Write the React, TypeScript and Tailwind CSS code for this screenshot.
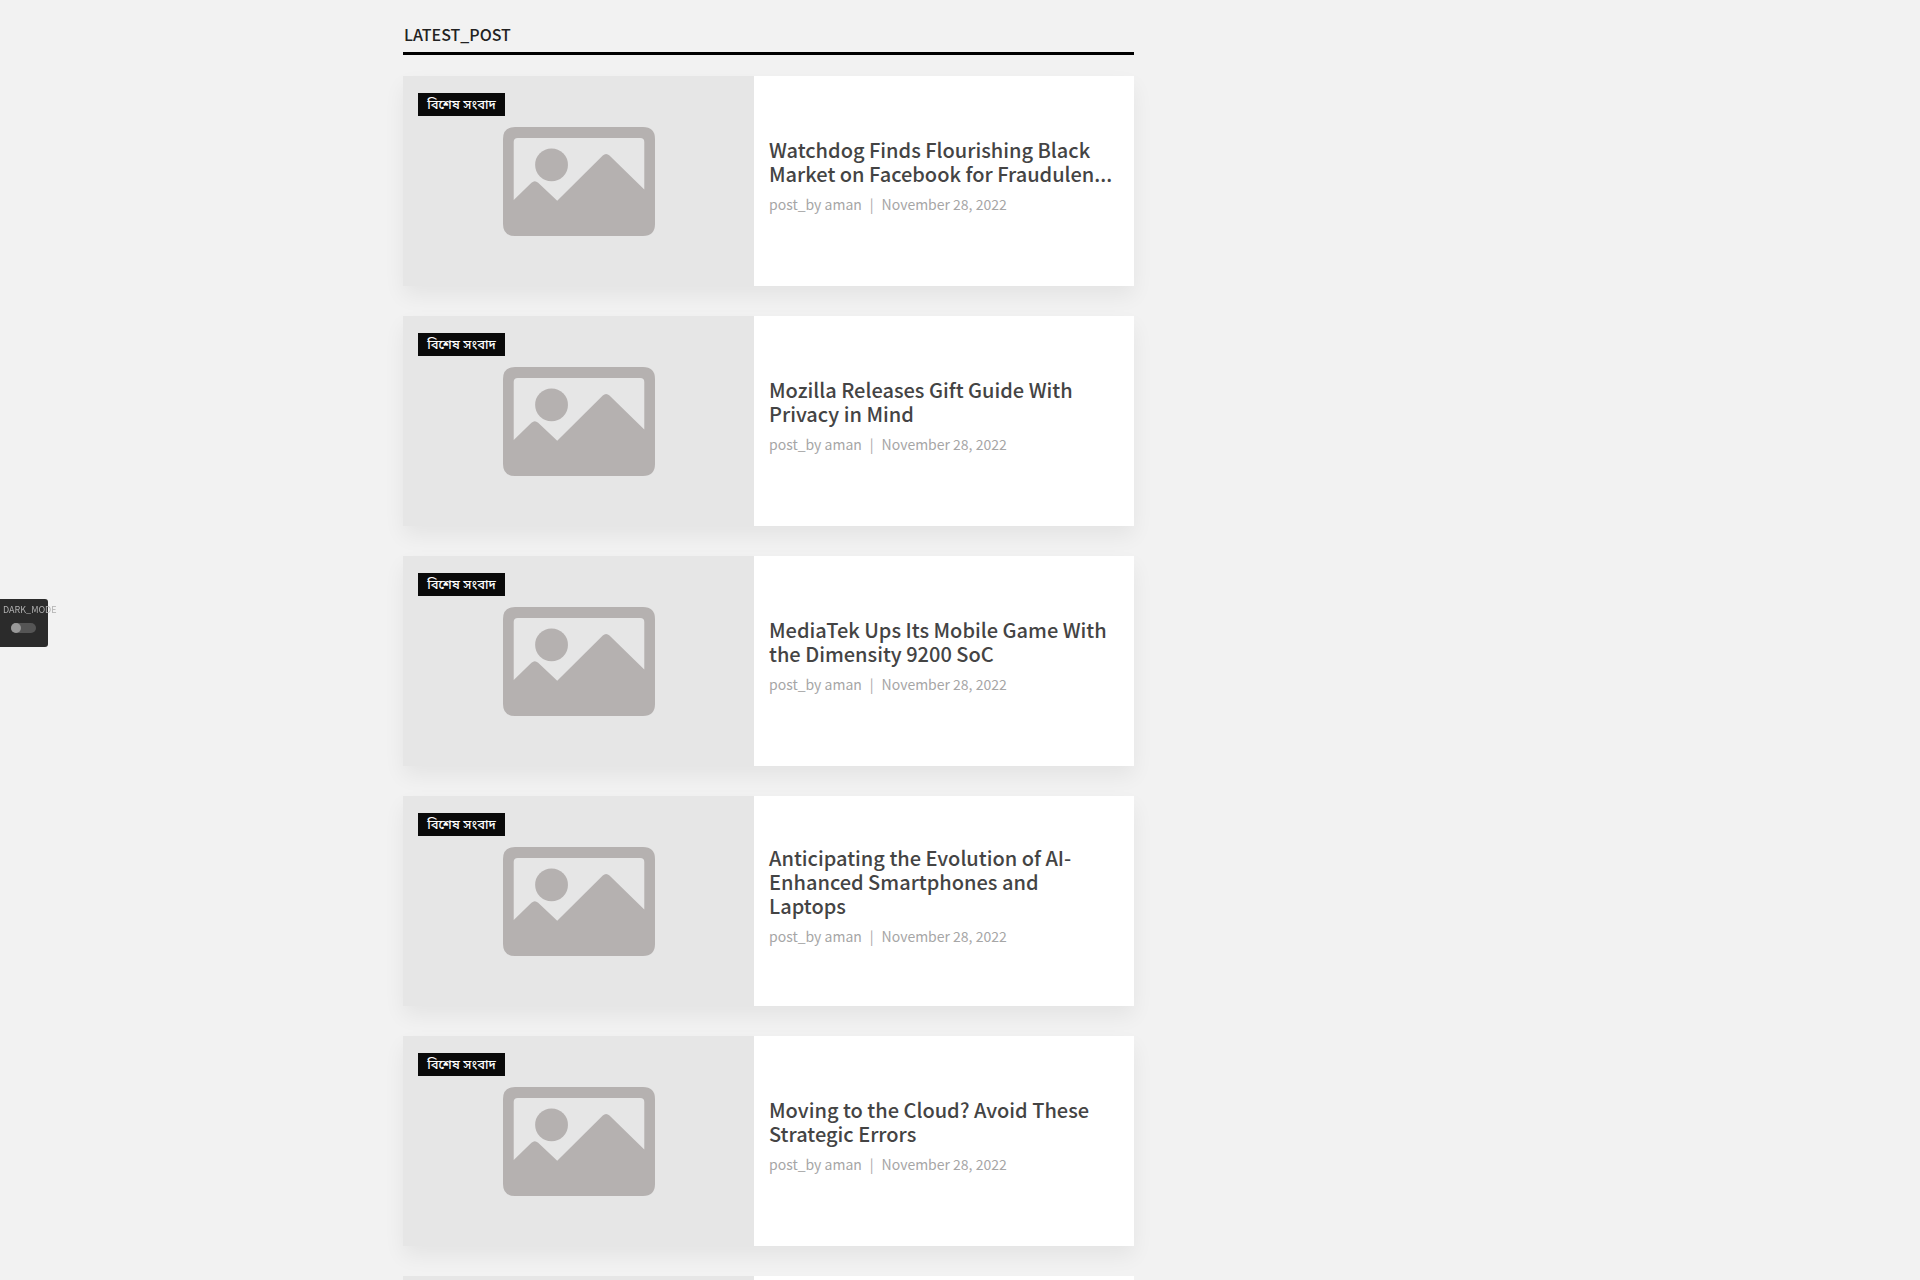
const posts = [
  "Watchdog Finds Flourishing Black Market on Facebook for Fraudulen...",
  "Mozilla Releases Gift Guide With Privacy in Mind",
  "MediaTek Ups Its Mobile Game With the Dimensity 9200 SoC",
  "Anticipating the Evolution of AI-Enhanced Smartphones and Laptops",
  "Moving to the Cloud? Avoid These Strategic Errors",
];

const Placeholder = () => (
  <svg
    viewBox="0 0 454 328"
    preserveAspectRatio="none"
    className="w-[152px] h-[109px]"
    fill="#b5b1b0"
  >
    <path
      fillRule="evenodd"
      d="M36 0H418Q454 0 454 36V292Q454 328 418 328H36Q0 328 0 292V36Q0 0 36 0ZM32 220L85 168Q95 158 105 168L162 222L298 86Q308 76 318 86L422 188V45Q422 33 410 33H44Q32 33 32 45Z"
    />
    <circle cx="145" cy="114" r="49" />
  </svg>
);

const PostCard = ({ title }: { title: string }) => {
  return (
    <article className="flex h-[210px] mb-[30px] bg-white shadow-[0_10px_20px_rgba(0,0,0,0.06)]">
      <div className="relative w-[351px] shrink-0 flex items-center justify-center bg-[#e6e6e6]">
        <span className="absolute left-[14px] top-[16px] h-[25px] w-[89px] flex items-center justify-center bg-[#0a0a0a] border border-[#e6e6e6] text-white text-[13px] font-medium pt-[2px] font-['Noto_Sans_Bengali','Noto_Sans','Liberation_Sans',sans-serif]">
          বিশেষ সংবাদ
        </span>
        <Placeholder />
      </div>
      <div className="flex-1 flex flex-col justify-center pl-[15px] pr-[15px] pb-[9px]">
        <h2 className="text-[20px] leading-[24px] font-medium text-[#444444]">
          {title}
        </h2>
        <p className="mt-[6px] text-[14px] leading-[24px] text-[#a6a6a6] whitespace-nowrap">
          post_by aman<span className="mx-[8px]">|</span>November 28, 2022
        </p>
      </div>
    </article>
  );
};

const App = () => {
  return (
    <div className="relative h-[1280px] overflow-hidden bg-[#f2f2f2] font-['Noto_Sans_CJK_SC','Noto_Sans',sans-serif]">
      <main className="w-[731px] ml-[403px]">
        <h1 className="h-[55px] pt-[22px] pl-[1px] border-b-[3px] border-black text-[16px] leading-[24px] font-medium text-[#222222]">
          LATEST_POST
        </h1>
        <div className="mt-[21px]">
          {posts.map((title) => (
            <PostCard key={title} title={title} />
          ))}
          <div className="flex h-[210px] bg-white">
            <div className="w-[351px] bg-[#e6e6e6]" />
          </div>
        </div>
      </main>
      <aside className="fixed left-0 top-[599px] w-[48px] h-[48px] bg-[#2b2b2b] rounded-r-[3px] flex flex-col items-center">
        <span className="ml-[3px] mt-[5px] self-start text-[9px] leading-[12px] text-[#b0b0b0] whitespace-nowrap">
          DARK_MODE
        </span>
        <span className="mt-[7px] ml-[-2px] w-[25px] h-[10px] rounded-full bg-[#555555] flex items-center">
          <span className="w-[10px] h-[10px] rounded-full bg-[#999999]" />
        </span>
      </aside>
    </div>
  );
};
export default App;
